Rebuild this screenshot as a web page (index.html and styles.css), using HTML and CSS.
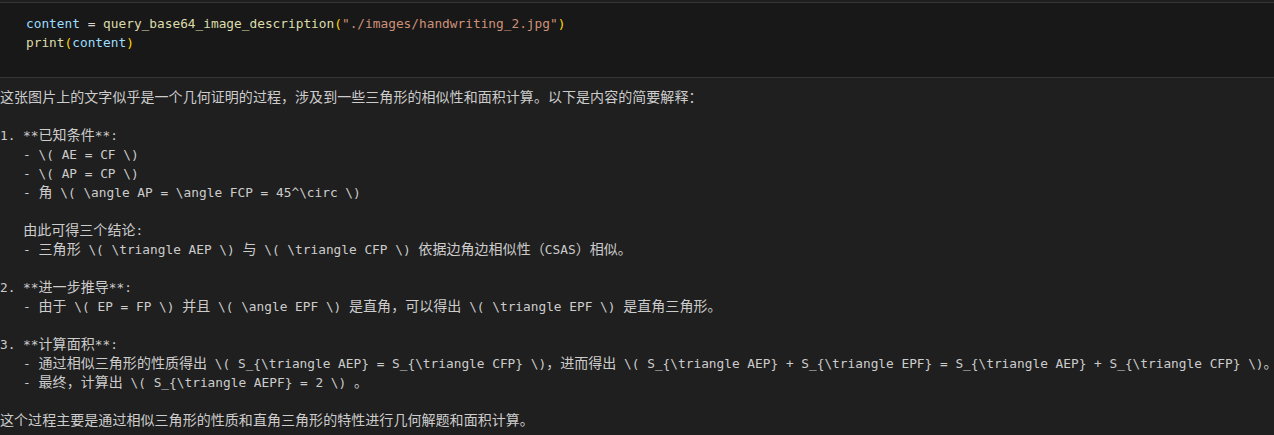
FILE: index.html
```html
<!DOCTYPE html>
<html lang="zh">
<head>
<meta charset="utf-8">
<link rel="stylesheet" href="styles.css">
</head>
<body>
<div class="cell">
<pre class="code"><span class="var">content</span> <span class="op">=</span> <span class="fn">query_base64_image_description</span><span class="br">(</span><span class="str">"./images/handwriting_2.jpg"</span><span class="br">)</span>
<span class="fn">print</span><span class="br">(</span><span class="var">content</span><span class="br">)</span></pre>
</div>
<div class="output">
<pre class="out"><span class="zh">这张图片上的文字似乎是一个几何证明的过程，涉及到一些三角形的相似性和面积计算。以下是内容的简要解释：</span>

1. **<span class="zh">已知条件</span>**:
   - \( AE = CF \)
   - \( AP = CP \)
   - <span class="zh">角</span> \( \angle AP = \angle FCP = 45^\circ \)

   <span class="zh">由此可得三个结论</span>:
   - <span class="zh">三角形</span> \( \triangle AEP \) <span class="zh">与</span> \( \triangle CFP \) <span class="zh">依据边角边相似性（</span>CSAS<span class="zh">）相似。</span>

2. **<span class="zh">进一步推导</span>**:
   - <span class="zh">由于</span> \( EP = FP \) <span class="zh">并且</span> \( \angle EPF \) <span class="zh">是直角，可以得出</span> \( \triangle EPF \) <span class="zh">是直角三角形。</span>

3. **<span class="zh">计算面积</span>**:
   - <span class="zh">通过相似三角形的性质得出</span> \( S_{\triangle AEP} = S_{\triangle CFP} \)<span class="zh">，进而得出</span> \( S_{\triangle AEP} + S_{\triangle EPF} = S_{\triangle AEP} + S_{\triangle CFP} \)<span class="zh">。</span>
   - <span class="zh">最终，计算出</span> \( S_{\triangle AEPF} = 2 \) <span class="zh">。</span>

<span class="zh">这个过程主要是通过相似三角形的性质和直角三角形的特性进行几何解题和面积计算。</span></pre>
</div>
</body>
</html>
```
FILE: styles.css
```css
html, body {
  margin: 0;
  padding: 0;
  background: #1f1f1f;
  overflow: hidden;
}
body {
  width: 1274px;
  height: 435px;
}
.cell {
  margin-top: 2px;
  border-top: 1px solid #363636;
  border-bottom: 1px solid #363636;
  background: #181818;
  padding: 11px 0 25px 26px;
}
pre {
  margin: 0;
  font-family: "DejaVu Sans Mono", "Liberation Mono", monospace;
  font-size: 12.8px;
  line-height: 19px;
  white-space: pre;
}
.code { color: #cccccc; }
.var { color: #9cdcfe; }
.op { color: #d4d4d4; }
.fn { color: #dcdcaa; }
.br { color: #ffd700; }
.str { color: #ce9178; }
.output {
  padding-top: 10px;
}
.out {
  color: #cccccc;
}
.zh {
  font-family: "Noto Sans CJK SC", sans-serif;
  font-size: 14px;
  line-height: 14px;
  letter-spacing: 0.05px;
}
```
